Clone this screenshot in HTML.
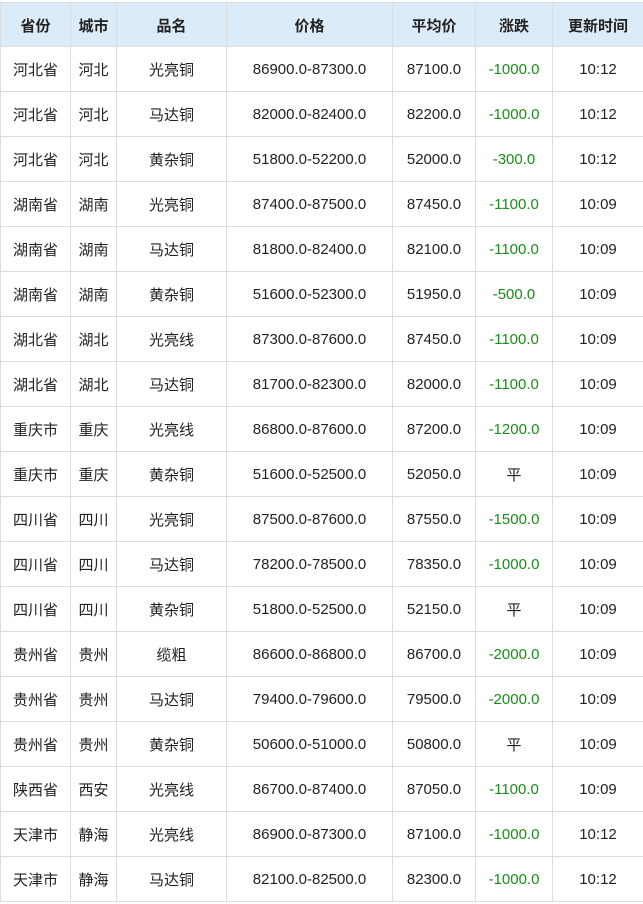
<!DOCTYPE html>
<html><head><meta charset="utf-8"><style>
html,body{margin:0;padding:0;background:#fff;width:643px;height:904px;overflow:hidden}
table{position:absolute;left:0;top:2px;border-collapse:collapse;table-layout:fixed;width:643px;font-family:"Liberation Sans","Noto Sans CJK SC",sans-serif;font-size:15px;color:#222}
td,th{border:1px solid #dcdcdc;text-align:center;height:43px;padding:1px 0 0 0;white-space:nowrap}
th{background:#dcebf8;font-weight:bold;height:42px;color:#222}
.g{color:#1a8c1a}
</style></head><body>
<table>
<colgroup><col style="width:70px"><col style="width:46px"><col style="width:110px"><col style="width:166px"><col style="width:83px"><col style="width:77px"><col style="width:91px"></colgroup>
<tr><th>省份</th><th>城市</th><th>品名</th><th>价格</th><th>平均价</th><th>涨跌</th><th>更新时间</th></tr>
<tr><td>河北省</td><td>河北</td><td>光亮铜</td><td>86900.0-87300.0</td><td>87100.0</td><td class="g">-1000.0</td><td>10:12</td></tr>
<tr><td>河北省</td><td>河北</td><td>马达铜</td><td>82000.0-82400.0</td><td>82200.0</td><td class="g">-1000.0</td><td>10:12</td></tr>
<tr><td>河北省</td><td>河北</td><td>黄杂铜</td><td>51800.0-52200.0</td><td>52000.0</td><td class="g">-300.0</td><td>10:12</td></tr>
<tr><td>湖南省</td><td>湖南</td><td>光亮铜</td><td>87400.0-87500.0</td><td>87450.0</td><td class="g">-1100.0</td><td>10:09</td></tr>
<tr><td>湖南省</td><td>湖南</td><td>马达铜</td><td>81800.0-82400.0</td><td>82100.0</td><td class="g">-1100.0</td><td>10:09</td></tr>
<tr><td>湖南省</td><td>湖南</td><td>黄杂铜</td><td>51600.0-52300.0</td><td>51950.0</td><td class="g">-500.0</td><td>10:09</td></tr>
<tr><td>湖北省</td><td>湖北</td><td>光亮线</td><td>87300.0-87600.0</td><td>87450.0</td><td class="g">-1100.0</td><td>10:09</td></tr>
<tr><td>湖北省</td><td>湖北</td><td>马达铜</td><td>81700.0-82300.0</td><td>82000.0</td><td class="g">-1100.0</td><td>10:09</td></tr>
<tr><td>重庆市</td><td>重庆</td><td>光亮线</td><td>86800.0-87600.0</td><td>87200.0</td><td class="g">-1200.0</td><td>10:09</td></tr>
<tr><td>重庆市</td><td>重庆</td><td>黄杂铜</td><td>51600.0-52500.0</td><td>52050.0</td><td>平</td><td>10:09</td></tr>
<tr><td>四川省</td><td>四川</td><td>光亮铜</td><td>87500.0-87600.0</td><td>87550.0</td><td class="g">-1500.0</td><td>10:09</td></tr>
<tr><td>四川省</td><td>四川</td><td>马达铜</td><td>78200.0-78500.0</td><td>78350.0</td><td class="g">-1000.0</td><td>10:09</td></tr>
<tr><td>四川省</td><td>四川</td><td>黄杂铜</td><td>51800.0-52500.0</td><td>52150.0</td><td>平</td><td>10:09</td></tr>
<tr><td>贵州省</td><td>贵州</td><td>缆粗</td><td>86600.0-86800.0</td><td>86700.0</td><td class="g">-2000.0</td><td>10:09</td></tr>
<tr><td>贵州省</td><td>贵州</td><td>马达铜</td><td>79400.0-79600.0</td><td>79500.0</td><td class="g">-2000.0</td><td>10:09</td></tr>
<tr><td>贵州省</td><td>贵州</td><td>黄杂铜</td><td>50600.0-51000.0</td><td>50800.0</td><td>平</td><td>10:09</td></tr>
<tr><td>陕西省</td><td>西安</td><td>光亮线</td><td>86700.0-87400.0</td><td>87050.0</td><td class="g">-1100.0</td><td>10:09</td></tr>
<tr><td>天津市</td><td>静海</td><td>光亮线</td><td>86900.0-87300.0</td><td>87100.0</td><td class="g">-1000.0</td><td>10:12</td></tr>
<tr><td>天津市</td><td>静海</td><td>马达铜</td><td>82100.0-82500.0</td><td>82300.0</td><td class="g">-1000.0</td><td>10:12</td></tr>
</table>
</body></html>
